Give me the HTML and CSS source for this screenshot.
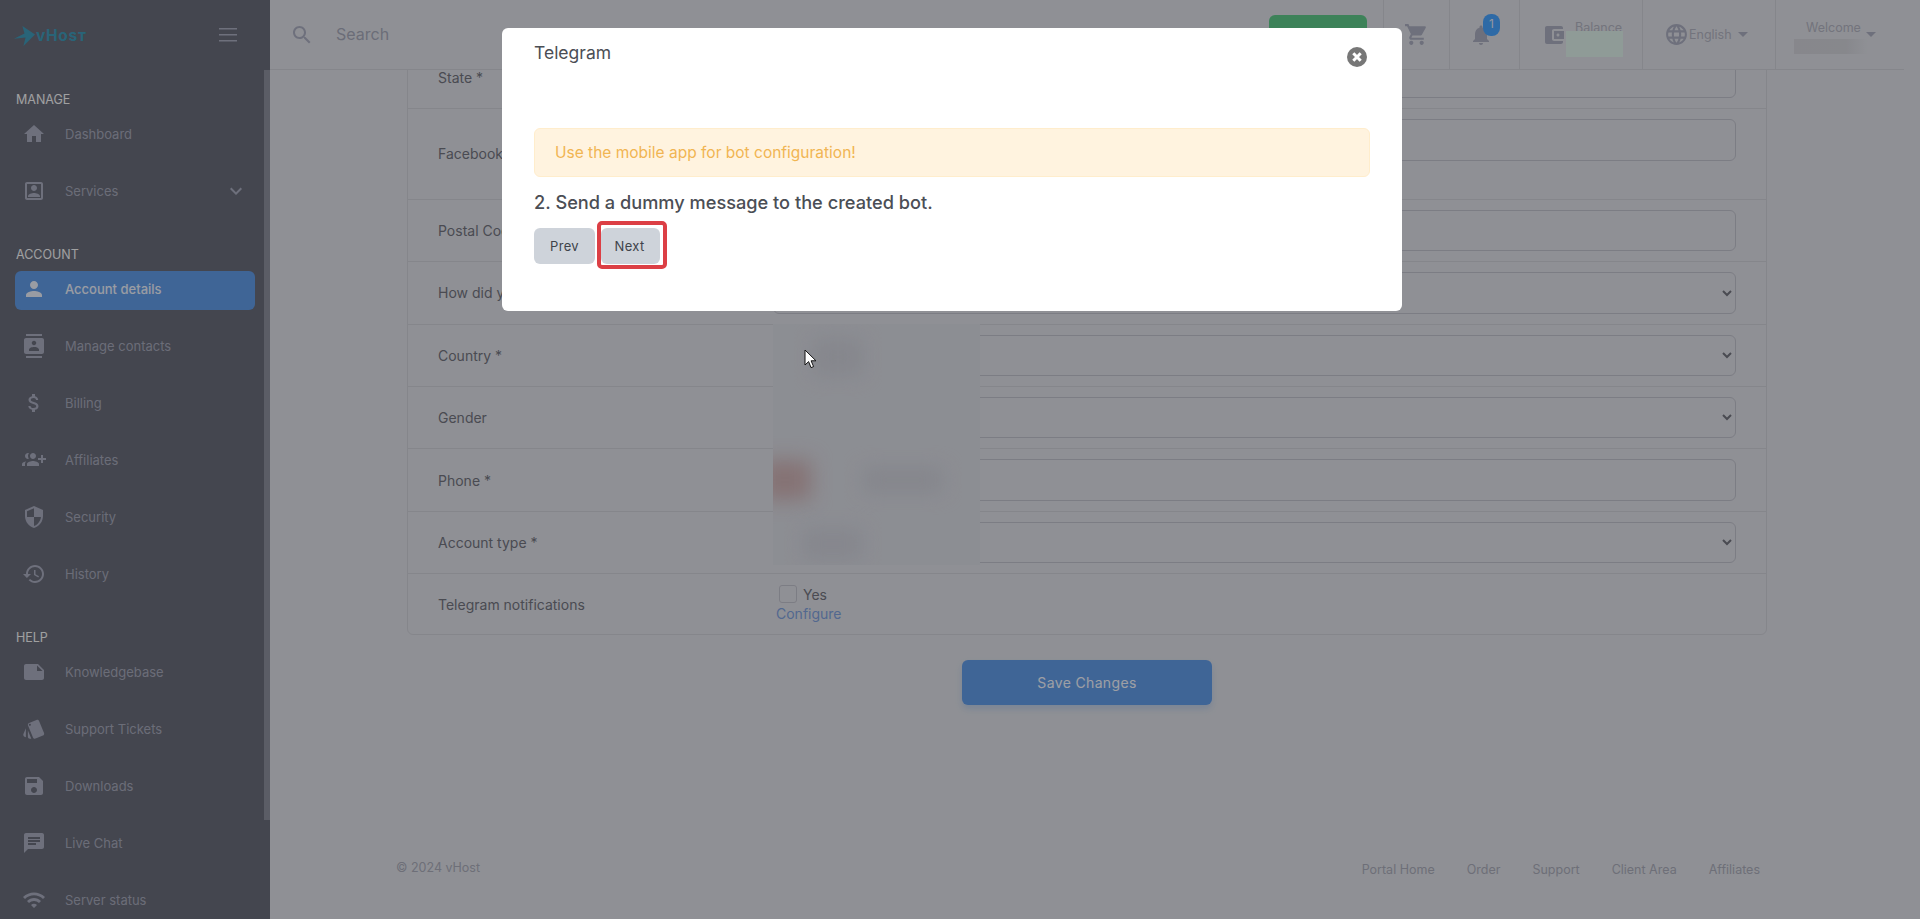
FILE: index.html
```html
<!DOCTYPE html>
<html lang="en">
<head>
    <meta charset="UTF-8">
    <meta name="viewport" content="width=device-width, initial-scale=1.0">
    <title>Account details - vHost</title>
    <link rel="stylesheet" href="styles.css">
</head>
<body>
    <div class="layout">
        <!-- Sidebar -->
        <aside class="sidebar">
            <div class="brand">
                <div class="logo">
                    <svg class="logo-mark" viewBox="0 0 20 20"><path d="M8 1l12 8L9 20l2-8-11 1 10-5z"/></svg>
                    <span class="logo-text">vHost</span>
                </div>
                <svg class="burger" viewBox="0 0 18 14"><path d="M0 0h18v1.4H0zM0 6h18v1.4H0zM0 12h18v1.4H0z"/></svg>
            </div>
            <div class="sidebar-scroll"></div>

            <nav class="nav-section">
                <div class="nav-title">MANAGE</div>
                <a class="nav-item"><svg viewBox="0 0 24 24"><path d="M10 20v-6h4v6h5v-8h3L12 3 2 12h3v8z"/></svg>Dashboard</a>
                <a class="nav-item"><svg viewBox="0 0 24 24"><path d="M19 3H5c-1.11 0-2 .9-2 2v14c0 1.1.89 2 2 2h14c1.1 0 2-.9 2-2V5c0-1.1-.9-2-2-2zm0 16H5V5h14v14zM12 12c1.65 0 3-1.35 3-3s-1.35-3-3-3-3 1.35-3 3 1.35 3 3 3zm-6 6h12v-1c0-2-4-3.1-6-3.1S6 15 6 17z"/></svg>Services<svg class="nav-arrow" viewBox="0 0 24 24"><path d="M16.59 8.59L12 13.17 7.41 8.59 6 10l6 6 6-6z"/></svg></a>
            </nav>

            <nav class="nav-section">
                <div class="nav-title">ACCOUNT</div>
                <a class="nav-item active"><svg viewBox="0 0 24 24"><path d="M12 12c2.21 0 4-1.79 4-4s-1.79-4-4-4-4 1.79-4 4 1.79 4 4 4zm0 2c-2.67 0-8 1.34-8 4v2h16v-2c0-2.66-5.33-4-8-4z"/></svg>Account details</a>
                <a class="nav-item"><svg viewBox="0 0 24 24"><path d="M20 0H4v2h16V0zM4 24h16v-2H4v2zM20 4H4c-1.1 0-2 .9-2 2v12c0 1.1.9 2 2 2h16c1.1 0 2-.9 2-2V6c0-1.1-.9-2-2-2zm-8 2.75c1.24 0 2.25 1.01 2.25 2.25s-1.01 2.25-2.25 2.25S9.75 10.24 9.75 9 10.76 6.75 12 6.75zM17 17H7v-1.5c0-1.67 3.33-2.5 5-2.5s5 .83 5 2.5V17z"/></svg>Manage contacts</a>
                <a class="nav-item"><svg viewBox="0 0 24 24"><path d="M11.8 10.9c-2.27-.59-3-1.2-3-2.15 0-1.09 1.01-1.85 2.7-1.85 1.78 0 2.44.85 2.5 2.1h2.21c-.07-1.72-1.12-3.3-3.21-3.81V3h-3v2.16c-1.94.42-3.5 1.68-3.5 3.61 0 2.31 1.91 3.46 4.7 4.13 2.5.6 3 1.48 3 2.41 0 .69-.49 1.79-2.7 1.79-2.06 0-2.87-.92-2.98-2.1h-2.2c.12 2.19 1.76 3.42 3.68 3.83V21h3v-2.15c1.95-.37 3.5-1.5 3.5-3.55 0-2.84-2.43-3.81-4.7-4.4z"/></svg>Billing</a>
                <a class="nav-item"><svg viewBox="0 0 24 24"><path transform="matrix(-1 0 0 1 24 0)" d="M8 10H5V7H3v3H0v2h3v3h2v-3h3v-2zm10 1c1.66 0 2.99-1.34 2.99-3S19.66 5 18 5c-.32 0-.63.05-.91.14.57.81.9 1.79.9 2.86s-.34 2.04-.9 2.86c.28.09.59.14.91.14zm-5 0c1.66 0 2.99-1.34 2.99-3S14.66 5 13 5s-3 1.34-3 3 1.34 3 3 3zm6.62 2.16c.83.73 1.38 1.66 1.38 2.84v2h3v-2c0-1.54-2.37-2.49-4.38-2.84zM13 13c-2 0-6 1-6 3v2h12v-2c0-2-4-3-6-3z"/></svg>Affiliates</a>
                <a class="nav-item"><svg viewBox="0 0 24 24"><path d="M12 1L3 5v6c0 5.55 3.84 10.74 9 12 5.16-1.26 9-6.45 9-12V5l-9-4zm0 10.99h7c-.53 4.12-3.28 7.79-7 8.94V12H5V6.3l7-3.11v8.8z"/></svg>Security</a>
                <a class="nav-item"><svg viewBox="0 0 24 24"><path d="M13 3c-4.97 0-9 4.03-9 9H1l3.89 3.89.07.14L9 12H6c0-3.87 3.13-7 7-7s7 3.13 7 7-3.13 7-7 7c-1.93 0-3.68-.79-4.94-2.06l-1.42 1.42C8.27 19.99 10.51 21 13 21c4.97 0 9-4.03 9-9s-4.03-9-9-9zm-1 5v5l4.28 2.54.72-1.21-3.5-2.08V8H12z"/></svg>History</a>
            </nav>

            <nav class="nav-section">
                <div class="nav-title">HELP</div>
                <a class="nav-item"><svg viewBox="0 0 24 24"><path d="M22 10l-6-6H4c-1.1 0-2 .9-2 2v12.01c0 1.1.9 1.99 2 1.99l16-.01c1.1 0 2-.89 2-1.99v-8zm-7-4.5l5.5 5.5H15V5.5z"/></svg>Knowledgebase</a>
                <a class="nav-item"><svg viewBox="0 0 24 24"><path d="M2.53 19.65l1.34.56v-9.03l-2.43 5.86c-.41 1.02.08 2.19 1.09 2.61zm19.5-3.7L17.07 3.98c-.31-.75-1.04-1.21-1.81-1.23-.26 0-.53.04-.79.15L7.1 5.95c-.75.31-1.21 1.03-1.23 1.8-.01.27.04.54.15.8l4.96 11.97c.31.76 1.05 1.22 1.83 1.23.26 0 .52-.05.77-.15l7.36-3.05c1.02-.42 1.51-1.59 1.09-2.6zM7.88 8.75c-.55 0-1-.45-1-1s.45-1 1-1 1 .45 1 1-.45 1-1 1zm-2 11c0 1.1.9 2 2 2h1.45l-3.45-8.34v6.34z"/></svg>Support Tickets</a>
                <a class="nav-item"><svg viewBox="0 0 24 24"><path d="M17 3H5c-1.11 0-2 .9-2 2v14c0 1.1.89 2 2 2h14c1.1 0 2-.9 2-2V7l-4-4zm-5 16c-1.66 0-3-1.34-3-3s1.34-3 3-3 3 1.34 3 3-1.34 3-3 3zm3-10H5V5h10v4z"/></svg>Downloads</a>
                <a class="nav-item"><svg viewBox="0 0 24 24"><path d="M20 2H4c-1.1 0-1.99.9-1.99 2L2 22l4-4h14c1.1 0 2-.9 2-2V4c0-1.1-.9-2-2-2zM6 9h12v2H6V9zm8 5H6v-2h8v2zm4-6H6V6h12v2z"/></svg>Live Chat</a>
                <a class="nav-item"><svg viewBox="0 0 24 24"><path d="M1 9l2 2c4.97-4.97 13.03-4.97 18 0l2-2C16.93 2.93 7.08 2.93 1 9zm8 8l3 3 3-3c-1.65-1.66-4.34-1.66-6 0zm-4-4l2 2c2.76-2.76 7.24-2.76 10 0l2-2C15.14 9.14 8.87 9.14 5 13z"/></svg>Server status</a>
            </nav>
        </aside>

        <div class="content">
            <!-- Top bar -->
            <header class="topbar">
                <svg class="search-icon" viewBox="0 0 24 24"><path d="M15.5 14h-.79l-.28-.27C15.41 12.59 16 11.11 16 9.5 16 5.91 13.09 3 9.5 3S3 5.91 3 9.5 5.91 16 9.5 16c1.61 0 3.09-.59 4.23-1.57l.27.28v.79l5 4.99L20.49 19l-4.99-5zm-6 0C7.01 14 5 11.99 5 9.5S7.01 5 9.5 5 14 7.01 14 9.5 11.99 14 9.5 14z"/></svg>
                <span class="search-text">Search</span>
                <div class="green-btn"></div>
                <div class="top-cell cell-cart">
                    <svg viewBox="0 0 24 24"><path d="M7 18c-1.1 0-1.99.9-1.99 2S5.9 22 7 22s2-.9 2-2-.9-2-2-2zM1 2v2h2l3.6 7.59-1.35 2.45c-.16.28-.25.61-.25.96 0 1.1.9 2 2 2h12v-2H7.42c-.14 0-.25-.11-.25-.25l.03-.12.9-1.63h7.45c.75 0 1.41-.41 1.75-1.03l3.58-6.49c.08-.14.12-.31.12-.48 0-.55-.45-1-1-1H5.21l-.94-2H1zm16 16c-1.1 0-1.99.9-1.99 2s.89 2 1.99 2 2-.9 2-2-.9-2-2-2z"/></svg>
                </div>
                <div class="top-cell cell-bell">
                    <svg viewBox="0 0 24 24"><path d="M12 22c1.1 0 2-.9 2-2h-4c0 1.1.89 2 2 2zm6-6v-5c0-3.07-1.64-5.64-4.5-6.32V4c0-.83-.67-1.5-1.5-1.5s-1.5.67-1.5 1.5v.68C7.63 5.36 6 7.92 6 11v5l-2 2v1h16v-1l-2-2z"/></svg>
                    <span class="badge">1</span>
                </div>
                <div class="top-cell cell-balance">
                    <svg viewBox="0 0 24 24"><path d="M21 18v1c0 1.1-.9 2-2 2H5c-1.11 0-2-.9-2-2V5c0-1.1.89-2 2-2h14c1.1 0 2 .9 2 2v1h-9c-1.11 0-2 .9-2 2v8c0 1.1.89 2 2 2h9zm-9-2h10V8H12v8zm4-2.5c-.83 0-1.5-.67-1.5-1.5s.67-1.5 1.5-1.5 1.5.67 1.5 1.5-.67 1.5-1.5 1.5z"/></svg>
                    <span class="top-label">Balance</span>
                    <div class="redact redact-balance"></div>
                </div>
                <div class="top-cell cell-lang">
                    <svg viewBox="0 0 24 24"><path d="M11.99 2C6.47 2 2 6.48 2 12s4.47 10 9.99 10C17.52 22 22 17.52 22 12S17.52 2 11.99 2zm6.93 6h-2.95c-.32-1.25-.78-2.45-1.38-3.56 1.84.63 3.37 1.91 4.33 3.56zM12 4.04c.83 1.2 1.48 2.53 1.91 3.96h-3.82c.43-1.43 1.08-2.76 1.91-3.96zM4.26 14C4.1 13.36 4 12.69 4 12s.1-1.36.26-2h3.38c-.08.66-.14 1.32-.14 2 0 .68.06 1.34.14 2H4.26zm.82 2h2.95c.32 1.25.78 2.45 1.38 3.56-1.84-.63-3.37-1.9-4.33-3.56zm2.95-8H5.08c.96-1.66 2.49-2.93 4.33-3.56C8.81 5.55 8.35 6.75 8.03 8zM12 19.96c-.83-1.2-1.48-2.53-1.91-3.96h3.82c-.43 1.43-1.08 2.76-1.91 3.96zM14.34 14H9.66c-.09-.66-.16-1.32-.16-2 0-.68.07-1.35.16-2h4.68c.09.65.16 1.32.16 2 0 .68-.07 1.34-.16 2zm.25 5.56c.6-1.11 1.06-2.31 1.38-3.56h2.95c-.96 1.65-2.49 2.93-4.33 3.56zM16.36 14c.08-.66.14-1.32.14-2 0-.68-.06-1.34-.14-2h3.38c.16.64.26 1.31.26 2s-.1 1.36-.26 2h-3.38z"/></svg>
                    <span class="lang-text">English</span>
                    <i class="caret"></i>
                </div>
                <div class="top-cell cell-user">
                    <span class="top-label">Welcome</span>
                    <i class="caret"></i>
                    <div class="redact redact-user"></div>
                </div>
            </header>

            <main class="main">
                <!-- Account form, scrolled so the first row runs under the top bar -->
                <div class="form-table">
                    <div class="form-row"><label>State *</label><input type="text"></div>
                    <div class="form-row row-tall"><label>Facebook</label><input type="text"></div>
                    <div class="form-row"><label>Postal Code</label><input type="text"></div>
                    <div class="form-row"><label>How did you hear</label><select></select></div>
                    <div class="form-row"><label>Country *</label><select></select></div>
                    <div class="form-row"><label>Gender</label><select></select></div>
                    <div class="form-row"><label>Phone *</label><input type="text"></div>
                    <div class="form-row"><label>Account type *</label><select></select></div>
                    <div class="form-row row-last">
                        <label>Telegram notifications</label>
                        <div class="telegram-opts">
                            <div class="check-line"><span class="check"></span>Yes</div>
                            <a class="link">Configure</a>
                        </div>
                    </div>
                    <div class="redact-col">
                        <i class="blob blob-red"></i>
                        <i class="blob blob-phone"></i>
                        <i class="blob blob-country"></i>
                        <i class="blob blob-type"></i>
                    </div>
                </div>

                <button class="save-btn">Save Changes</button>

                <footer class="footer">
                    <span class="copy">© 2024 vHost</span>
                    <div class="footer-links">
                        <a>Portal Home</a>
                        <a>Order</a>
                        <a>Support</a>
                        <a>Client Area</a>
                        <a>Affiliates</a>
                    </div>
                </footer>
            </main>
        </div>
    </div>

    <!-- Modal -->
    <div class="backdrop">
        <div class="modal">
            <div class="modal-head">
                <h5>Telegram</h5>
                <svg class="modal-close" viewBox="0 0 20 20"><circle cx="10" cy="10" r="10"/><path d="M6.3 6.3l7.4 7.4M13.7 6.3l-7.4 7.4"/></svg>
            </div>
            <div class="alert">Use the mobile app for bot configuration!</div>
            <h4 class="step">2. Send a dummy message to the created bot.</h4>
            <div class="modal-actions">
                <button class="btn">Prev</button>
                <button class="btn btn-marked">Next</button>
            </div>
        </div>
    </div>

    <svg class="cursor" viewBox="0 0 13 20"><path d="M1 1v15l3.6-3.4 2.4 6 2.6-1-2.5-5.8H12z"/></svg>
</body>
</html>
```

FILE: styles.css
```css
/* Colours sit under a 35% black backdrop, so they are lighter than they look */
* {
    box-sizing: border-box;
}
body {
    margin: 0;
    height: 919px;
    overflow: hidden;
    font-family: Inter, "Liberation Sans", sans-serif;
    font-size: 14px;
    background: #dcdee5;
    color: #72737e;
}
.layout {
    display: flex;
    height: 919px;
}

/* Sidebar */
.sidebar {
    position: relative;
    width: 270px;
    flex: none;
    background: #696c7a;
    overflow: hidden;
}
.brand {
    display: flex;
    align-items: center;
    justify-content: space-between;
    height: 70px;
    padding: 0 33px 0 14px;
}
.logo {
    display: flex;
    align-items: center;
    gap: 1px;
}
.logo-mark {
    width: 21px;
    height: 21px;
    fill: #3f9ab9;
}
.logo-text {
    font-size: 15.5px;
    font-weight: 700;
    font-variant: small-caps;
    letter-spacing: 0.7px;
    color: #3f9ab9;
}
.burger {
    width: 18px;
    height: 14px;
    fill: #a9acbf;
}
.sidebar-scroll {
    position: absolute;
    top: 70px;
    right: 0;
    width: 6px;
    height: 750px;
    background: #8c8f9d;
}
.nav-section {
    padding-bottom: 15px;
}
.nav-section:first-of-type {
    padding-top: 19.5px;
}
.nav-title {
    height: 20px;
    line-height: 20px;
    margin-bottom: 6px;
    padding-left: 16px;
    font-size: 12.5px;
    color: #f6f6f8;
}
.nav-item {
    display: flex;
    align-items: center;
    gap: 19px;
    width: 240px;
    height: 39px;
    margin: 0 0 18px 15px;
    padding: 0 7px 2px;
    border-radius: 6px;
    font-size: 13px;
    color: #a5a8b9;
}
.nav-item svg {
    width: 24px;
    height: 24px;
    flex: none;
    fill: #a9acbf;
}
.nav-item .nav-arrow {
    margin-left: auto;
}
.nav-item.active {
    background: #619be7;
    color: #ecf0fb;
    font-weight: 500;
}
.nav-item.active svg {
    fill: #ecf0fb;
}

/* Top bar */
.content {
    flex: none;
    width: 1634px;
}
.topbar {
    display: flex;
    align-items: center;
    height: 70px;
    border-bottom: 1px solid #cdced6;
    padding-left: 20px;
    position: relative;
    z-index: 2;
    background: #dcdee5;
}
.search-icon {
    width: 24px;
    height: 24px;
    fill: #a9acbf;
}
.search-text {
    margin: 0 0 1px 22px;
    font-size: 16px;
    color: #a5a8b9;
}
.green-btn {
    width: 98px;
    height: 38px;
    margin: 15px 16px 0 auto;
    border-radius: 6px;
    background: #5ec889;
    align-self: flex-start;
}
.top-cell {
    position: relative;
    display: flex;
    align-items: center;
    height: 69px;
    border-left: 1px solid #cdced6;
    color: #b1b2c0;
}
.top-cell svg {
    flex: none;
    fill: #a9acbf;
}
.cell-cart {
    width: 66px;
    padding-left: 20px;
}
.cell-cart svg {
    width: 25px;
    height: 25px;
}
.cell-bell {
    width: 70px;
    padding-left: 19px;
}
.cell-bell svg {
    width: 24px;
    height: 24px;
}
.badge {
    position: absolute;
    top: 14px;
    left: 33px;
    width: 17px;
    height: 22px;
    border-radius: 8px;
    background: #47a3ff;
    color: #e4e8f4;
    font-size: 12px;
    line-height: 20px;
    text-align: center;
}
.cell-balance {
    width: 123px;
    padding-left: 22px;
}
.cell-balance svg {
    width: 24px;
    height: 24px;
}
.top-label {
    align-self: flex-start;
    margin-top: 20px;
    font-size: 12.5px;
    line-height: 15px;
}
.cell-balance .top-label {
    margin-left: 9px;
}
.redact {
    position: absolute;
}
.redact-balance {
    top: 31px;
    left: 46px;
    width: 57px;
    height: 26px;
    background: #dcefe8;
}
.cell-lang {
    width: 133px;
    padding-left: 21px;
}
.cell-lang svg {
    width: 25px;
    height: 25px;
}
.lang-text {
    font-size: 12.5px;
    margin-bottom: 1px;
}
.caret {
    width: 0;
    height: 0;
    border: 5px solid transparent;
    border-top: 5px solid #a9acbf;
    border-bottom: 0;
    margin-left: 6px;
}
.cell-user {
    width: 129px;
    padding-left: 30px;
}
.cell-user .caret {
    margin-left: 5px;
}
.redact-user {
    top: 39px;
    left: 18px;
    width: 74px;
    height: 15px;
    background: linear-gradient(90deg, #cfd0d7, #d0d1d8 70%, #dcdee5);
}

/* Main form */
.main {
    display: flex;
    flex-direction: column;
    height: 849px;
    width: 1634px;
    overflow: hidden;
}
.form-table {
    position: relative;
    flex: none;
    width: 1360px;
    margin: -24px 0 0 137px;
    border: 1px solid #cdced6;
    border-radius: 6px;
}
.form-row {
    display: grid;
    grid-template-columns: 335px 1fr;
    align-items: center;
    padding: 10px 30px;
    border-bottom: 1px solid #cdced6;
}
.form-row label {
    white-space: nowrap;
    overflow: hidden;
}
.form-row input,
.form-row select {
    display: block;
    width: 100%;
    height: 41.4px;
    border: 1px solid #bfc0cb;
    border-radius: 6px;
    background: transparent;
    padding: 0 10px;
    color: #72737e;
}
.row-tall input {
    margin-bottom: 28px;
}
.row-tall label {
    margin-bottom: 2px;
}
.row-last {
    height: 60px;
    padding: 0 30px;
    border-bottom: 0;
}
.telegram-opts {
    display: flex;
    flex-direction: column;
    padding-left: 3px;
}
.check-line {
    display: flex;
    align-items: center;
    gap: 6px;
    height: 20px;
    margin-left: 3px;
}
.check {
    width: 18px;
    height: 18px;
    border: 1px solid #bfc0cb;
    border-radius: 3px;
}
.link {
    color: #7ea0dc;
    line-height: 20px;
}

/* Blurred-out values over the left of the form fields */
.redact-col {
    position: absolute;
    top: 277px;
    left: 365px;
    width: 207px;
    height: 241px;
    overflow: hidden;
    background: #d8dae2;
}
.blob {
    position: absolute;
    filter: blur(10px);
}
.blob-red {
    top: 136px;
    left: -14px;
    width: 52px;
    height: 40px;
    background: #cdb0b3;
}
.blob-phone {
    top: 145px;
    left: 90px;
    width: 80px;
    height: 22px;
    background: #cbcdd6;
}
.blob-country {
    top: 15px;
    left: 40px;
    width: 50px;
    height: 36px;
    background: #cdcfd8;
}
.blob-type {
    top: 205px;
    left: 30px;
    width: 60px;
    height: 30px;
    background: #cdcfd9;
}

.save-btn {
    flex: none;
    align-self: center;
    width: 250px;
    height: 45px;
    margin-top: 25px;
    border: 0;
    border-radius: 6px;
    background: #619be7;
    color: #f2f5fd;
    font-family: inherit;
    font-size: 14px;
    letter-spacing: 0.35px;
    box-shadow: 0 4px 6px rgba(97, 155, 231, 0.25);
}
.footer {
    display: flex;
    justify-content: space-between;
    align-items: flex-end;
    margin-top: auto;
    padding: 0 144px 45px 126px;
    font-size: 12.5px;
    color: #a9abb9;
}
.copy {
    margin-bottom: -1px;
}
.footer-links {
    display: flex;
    gap: 32px;
    margin-bottom: -3px;
}

/* Modal */
.backdrop {
    position: fixed;
    inset: 0;
    z-index: 10;
    display: flex;
    justify-content: center;
    align-items: flex-start;
    padding: 28px 16px 0 0;
    background: rgba(0, 0, 0, 0.35);
}
.modal {
    width: 900px;
    height: 283px;
    padding: 0 32px;
    border-radius: 6px;
    background: #fff;
    color: #4b4e55;
}
.modal-head {
    display: flex;
    justify-content: space-between;
    align-items: flex-start;
    height: 100px;
}
.modal-head h5 {
    margin: 13px 0 0;
    font-size: 17.5px;
    font-weight: 400;
    line-height: 24px;
}
.modal-close {
    width: 20px;
    height: 20px;
    margin: 19px 3px 0 0;
    fill: #777;
}
.modal-close path {
    stroke: #fff;
    stroke-width: 3;
    fill: none;
}
.alert {
    height: 49px;
    padding: 0 20px;
    line-height: 47px;
    border: 1px solid #ffedcc;
    border-radius: 6px;
    background: #fff3df;
    color: #f1b552;
    font-size: 15.5px;
}
.step {
    margin: 13px 0 14px;
    font-size: 18.2px;
    font-weight: 500;
    line-height: 24px;
}
.modal-actions {
    display: flex;
    gap: 6px;
}
.btn {
    position: relative;
    height: 36px;
    padding: 0;
    width: 61px;
    border: 0;
    border-radius: 6px;
    background: #ced3da;
    color: #3f434a;
    font-family: inherit;
    font-size: 13px;
    letter-spacing: 0.3px;
}
.btn-marked {
    width: 59px;
    padding-right: 2px;
}
.btn-marked::after {
    content: "";
    position: absolute;
    top: -7px;
    left: -4px;
    right: -7px;
    bottom: -5px;
    border: 4px solid #dc3f45;
    border-radius: 5px;
}

.cursor {
    position: fixed;
    top: 349px;
    left: 804px;
    z-index: 20;
    width: 13px;
    height: 20px;
    fill: #fff;
    stroke: #111;
    stroke-width: 1;
}
```
